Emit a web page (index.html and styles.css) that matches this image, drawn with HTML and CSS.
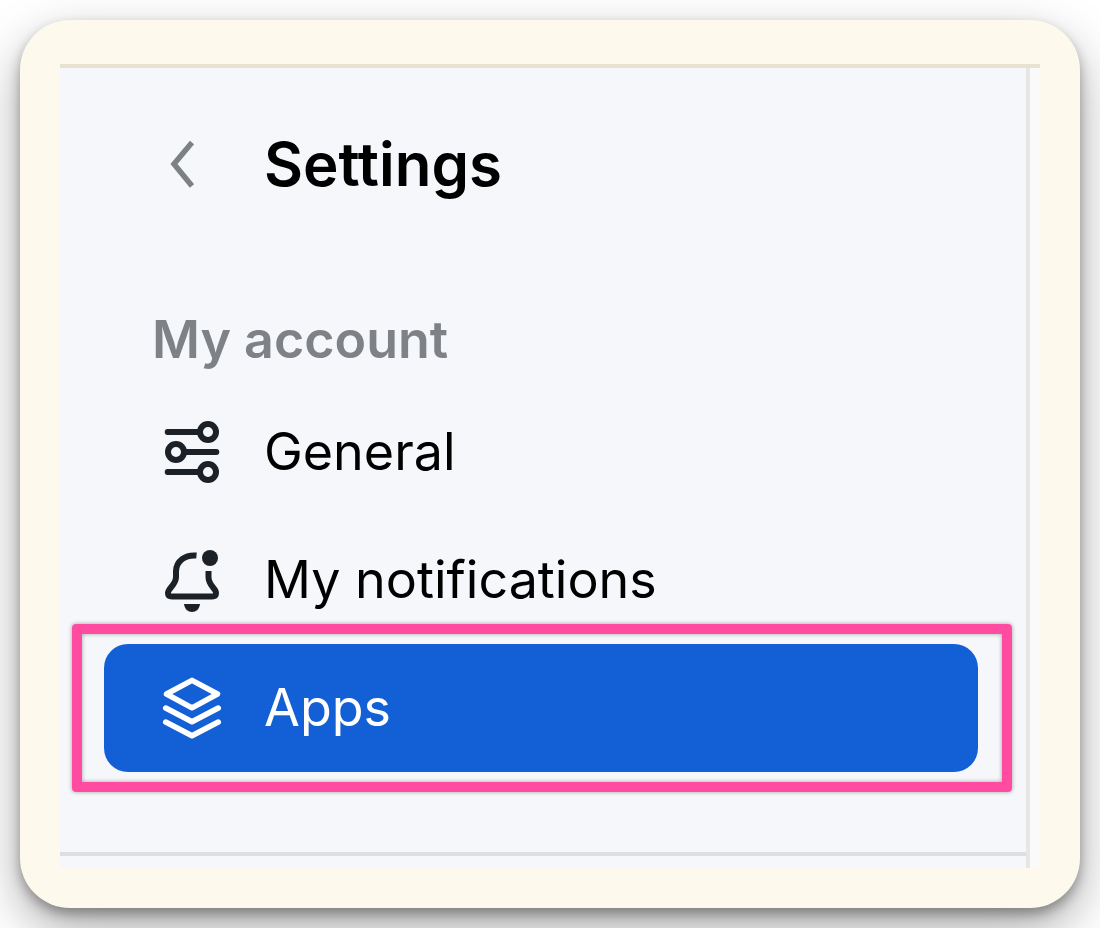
FILE: index.html
```html
<!DOCTYPE html>
<html lang="en">

<head>
    <meta charset="UTF-8">
    <meta name="viewport" content="width=device-width, initial-scale=1.0">
    <title>Settings</title>
    <link rel="stylesheet" href="styles.css">
</head>

<body>
    <div class="frame">
        <div class="screen">
            <nav class="sidebar">
                <header class="sidebar-header">
                    <svg class="back" viewBox="0 0 64 64">
                        <path d="M43 10.5L25 32L43 54" />
                    </svg>
                    <h1>Settings</h1>
                </header>

                <h2>My account</h2>

                <ul class="menu">
                    <li class="menu-item">
                        <svg class="icon" viewBox="0 0 64 64">
                            <path d="M7.7 12H39M25 32H56.3M7.7 52H39" />
                            <circle cx="48" cy="12" r="8" />
                            <circle cx="16" cy="32" r="8" />
                            <circle cx="48" cy="52" r="8" />
                        </svg>
                        <span>General</span>
                    </li>
                    <li class="menu-item">
                        <svg class="icon" viewBox="0 0 64 64">
                            <path class="butt" d="M36.5 7.5C25 6.5 16.5 13 16 23V29C16 37 8 40 8 45Q8 48.5 12 48.5H52Q56 48.5 56 45C56 40 48.5 38 48.5 29V23" />
                            <circle class="solid" cx="50" cy="10" r="8" />
                            <path class="solid" d="M24 56H40C39.5 61 36 64 32 64S24.5 61 24 56Z" />
                        </svg>
                        <span>My notifications</span>
                    </li>
                    <li class="menu-item active">
                        <svg class="icon" viewBox="0 0 64 64">
                            <path d="M32 4.3L57.5 18L32 31.8L6.5 18Z" />
                            <path d="M5.7 32L32 45.7L58.3 32M5.7 46L32 59.7L58.3 46" />
                        </svg>
                        <span>Apps</span>
                        <div class="highlight"></div>
                    </li>
                </ul>
            </nav>
        </div>
    </div>
</body>

</html>
```
FILE: styles.css
```css
* {
    box-sizing: border-box;
}

body {
    margin: 0;
    height: 928px;
    padding: 20px;
    overflow: hidden;
    background-color: #fff;
    font-family: Inter, sans-serif;
    color: #000;
}

.frame {
    height: 888px;
    padding: 44px 40px 40px;
    border-radius: 50px;
    background-color: #fdf9ec;
    box-shadow: 0 20px 50px rgba(0, 0, 0, 0.34), 0 6px 12px rgba(0, 0, 0, 0.3);
}

.screen {
    height: 804px;
    padding-right: 10px;
    border-top: 4px solid #e7e3d0;
    background-color: #fafafa;
}

.sidebar {
    height: 800px;
    padding: 48px 48px 0 44px;
    border-right: 4px solid #e6e6e6;
    background: linear-gradient(#dcdee2, #dcdee2) 0 784px / 100% 4px no-repeat #f5f7fb;
}

.sidebar-header {
    display: flex;
    align-items: center;
    height: 96px;
    padding-left: 45px;
}

.back {
    width: 64px;
    height: 64px;
    margin-right: 51px;
    fill: none;
    stroke: #7d8184;
    stroke-width: 5.5;
}

h1,
h2 {
    margin: 0;
    white-space: nowrap;
}

h1 {
    font-size: 60px;
    font-weight: 600;
    line-height: 96px;
}

h2 {
    margin-top: 88px;
    padding-left: 48px;
    font-size: 52px;
    font-weight: 600;
    line-height: 80px;
    color: #7e8185;
}

.menu {
    margin: 8px 0 0;
    padding: 0;
    list-style: none;
}

.menu-item {
    display: flex;
    align-items: center;
    gap: 40px;
    height: 128px;
    padding-left: 56px;
    border-radius: 24px;
    font-size: 52px;
    white-space: nowrap;
}

.menu-item span {
    padding-bottom: 2px;
}

.icon {
    width: 64px;
    height: 64px;
    overflow: visible;
    fill: none;
    stroke: #1c2027;
    stroke-width: 6;
    stroke-linecap: round;
    stroke-linejoin: round;
}

.icon .butt {
    stroke-linecap: butt;
}

.icon .solid {
    fill: #1c2027;
    stroke: none;
}

.active {
    position: relative;
    background-color: #1360d6;
    color: #fff;
}

.active .icon {
    stroke: #fff;
    stroke-width: 5.5;
}

.highlight {
    position: absolute;
    inset: -20px -34px -20px -32px;
    border: 10px solid #ff4ba0;
    border-radius: 4px;
    box-shadow: 0 0 4px rgba(0, 0, 0, 0.35), inset 0 0 4px rgba(0, 0, 0, 0.35);
}
```
